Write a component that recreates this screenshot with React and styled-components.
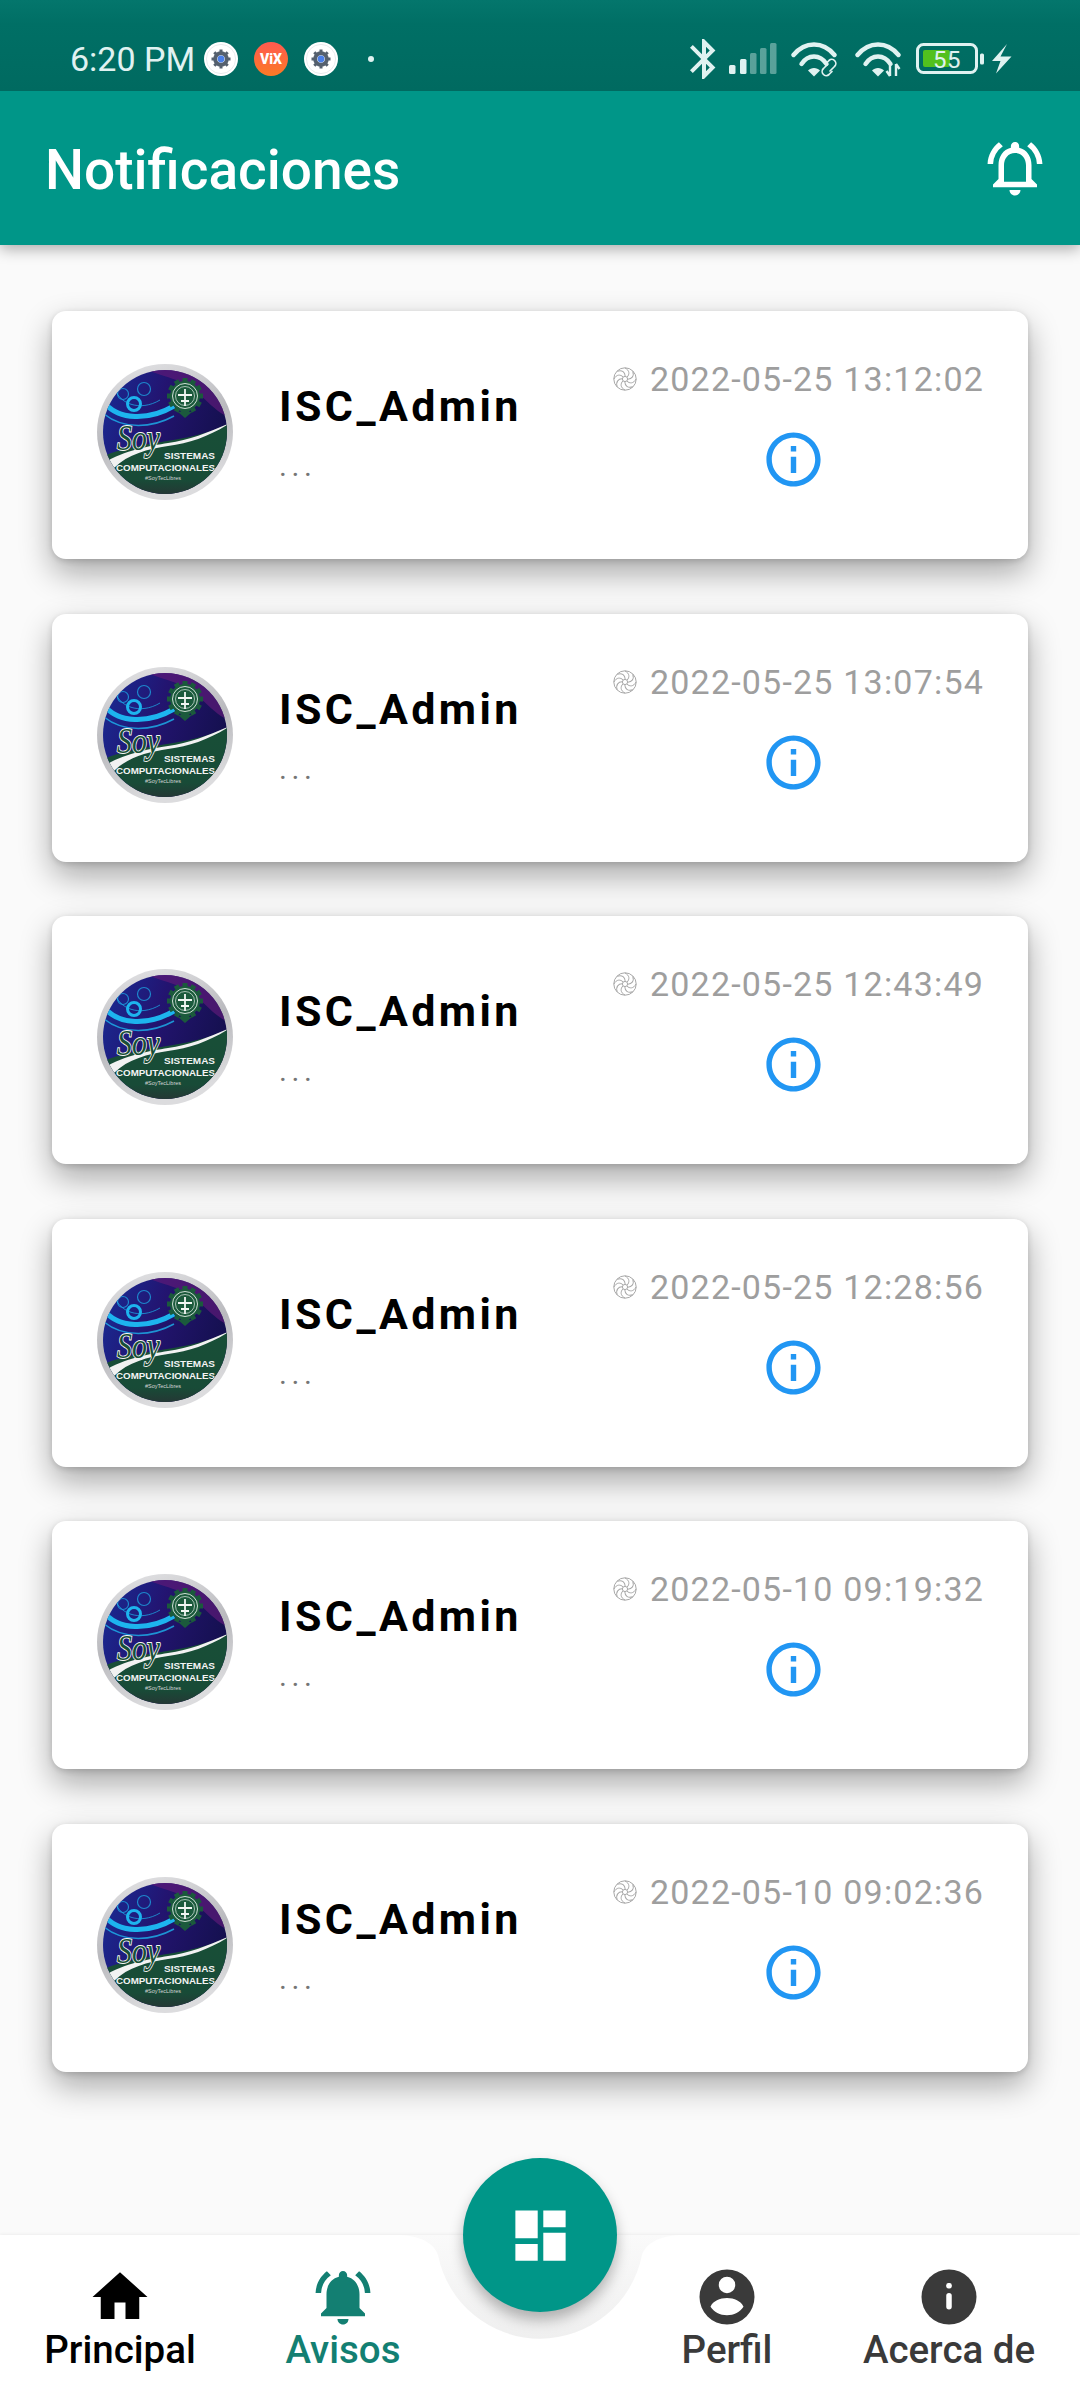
import React from "react";
import styled, { createGlobalStyle } from "styled-components";
import {
  MdBluetooth,
  MdDashboard,
  MdHome,
  MdInfoOutline,
  MdNotificationsActive,
  MdOutlineNotificationsActive,
} from "react-icons/md";

const GlobalStyle = createGlobalStyle`
  html, body {
    margin: 0;
    padding: 0;
    background: #fafafa;
  }
  * {
    box-sizing: border-box;
  }
`;

const Page = styled.div`
  width: 1080px;
  height: 2400px;
  display: flex;
  flex-direction: column;
  overflow: hidden;
  background: #fafafa;
  font-family: Roboto, "Liberation Sans", sans-serif;
`;

const StatusBar = styled.div`
  height: 91px;
  flex-shrink: 0;
  display: flex;
  align-items: center;
  justify-content: space-between;
  padding: 27px 68px 0 70px;
  color: #e0f2f1;
  background: linear-gradient(#04766c 0, #006f65 24px, #006a60 91px);
  position: relative;
  z-index: 3;
`;

const StatusGroup = styled.div`
  display: flex;
  align-items: center;
  gap: ${(p) => p.$gap}px;
`;

const Clock = styled.span`
  font-size: 34px;
  line-height: 40px;
  margin-right: -7px;
`;

const AppIcon = styled.svg`
  display: block;
  width: 34px;
  height: 34px;
`;

const StatusDot = styled.span`
  width: 6px;
  height: 6px;
  border-radius: 50%;
  background: #e0f2f1;
  margin-left: 14px;
`;

const BluetoothGlyph = styled(MdBluetooth)`
  display: block;
  margin-right: -13px;
`;

const StatusGlyph = styled.svg`
  display: block;
  margin-left: ${(p) => p.$shift || 0}px;
`;

const AppBar = styled.header`
  height: 154px;
  flex-shrink: 0;
  display: flex;
  align-items: center;
  justify-content: space-between;
  padding: 0 32px 0 45px;
  background: #009688;
  color: #fff;
  box-shadow: 0 4px 14px rgba(0, 0, 0, 0.32);
  position: relative;
  z-index: 2;
`;

const Title = styled.h1`
  margin: 3px 0 0;
  font-size: 55px;
  line-height: 60px;
  font-weight: 500;
`;

const List = styled.main`
  flex: 1;
  display: flex;
  flex-direction: column;
  gap: 54.6px;
  padding: 66px 52px 0;
`;

const Card = styled.article`
  height: 248px;
  flex-shrink: 0;
  display: flex;
  align-items: flex-start;
  padding: 53px 44px 0 45px;
  background: #fff;
  border-radius: 14px;
  box-shadow: 0 14px 32px rgba(0, 0, 0, 0.33), 0 2px 6px rgba(0, 0, 0, 0.15);
`;

const Avatar = styled.svg`
  display: block;
  width: 136px;
  height: 136px;
  flex-shrink: 0;
`;

const Message = styled.div`
  flex: 1;
  padding: 15px 0 0 46px;
`;

const Sender = styled.div`
  font-size: 43px;
  line-height: 54px;
  font-weight: 700;
  letter-spacing: 3.4px;
  color: #000;
`;

const Preview = styled.div`
  font-size: 30px;
  line-height: 36px;
  letter-spacing: 4.6px;
  color: #757575;
  margin-top: 15px;
`;

const Meta = styled.div`
  display: flex;
  flex-direction: column;
  align-items: center;
  margin-top: -5px;
`;

const DateLine = styled.div`
  display: flex;
  align-items: center;
  gap: 13px;
  font-size: 34px;
  line-height: 40px;
  letter-spacing: 1.2px;
  color: #9e9e9e;
  white-space: nowrap;
`;

const SwirlGlyph = styled.svg`
  display: block;
  flex-shrink: 0;
`;

const InfoButton = styled.div`
  display: flex;
  margin-top: 28px;
  margin-right: 10px;
  color: #2196f3;
`;

const BottomNav = styled.nav`
  height: 165px;
  flex-shrink: 0;
  display: grid;
  grid-template-columns: 240px 206px 178px 206px 238px;
  background: #fff;
  box-shadow: 0 -1px 3px rgba(0, 0, 0, 0.05);
  position: relative;
`;

const Notch = styled.svg`
  position: absolute;
  left: 0;
  top: -1px;
  width: 1080px;
  height: 112px;
`;

const Fab = styled.button`
  position: absolute;
  left: 463px;
  top: -77px;
  width: 154px;
  height: 154px;
  border: 0;
  padding: 0;
  border-radius: 50%;
  display: flex;
  align-items: center;
  justify-content: center;
  color: #fff;
  background: #009688;
  box-shadow: 0 8px 14px rgba(0, 0, 0, 0.28);
`;

const NavItem = styled.div`
  grid-column: ${(p) => p.$column};
  display: flex;
  flex-direction: column;
  align-items: center;
  padding-top: 29px;
  color: ${(p) => p.$color};
  position: relative;
`;

const NavIcon = styled.div`
  height: 65px;
  display: flex;
  font-size: 66px;
`;

const NavGlyph = styled.svg`
  display: block;
  width: 66px;
  height: 66px;
`;

const NavLabel = styled.span`
  font-size: 38.5px;
  line-height: 42px;
  font-weight: 500;
  white-space: nowrap;
`;

function GearBadge() {
  return (
    <AppIcon viewBox="0 0 34 34">
      <circle cx="17" cy="17" r="17" fill="#fff" />
      <circle cx="17" cy="17" r="14.6" fill="none" stroke="#d8dbe0" strokeWidth="0.6" />
      <circle cx="17" cy="17" r="5.800" fill="none" stroke="#55606e" strokeWidth="4" />
      <path
        stroke="#55606e"
        strokeWidth="3"
        d="M17 7.500V11M17 23v3.500M7.500 17H11M23 17h3.500M10.300 10.300l2.400 2.400M21.300 21.300l2.400 2.400M23.700 10.300l-2.400 2.400M12.700 21.300l-2.400 2.400"
      />
      <circle cx="17" cy="17" r="3.400" fill="#4a7fe8" />
    </AppIcon>
  );
}

function VixBadge() {
  return (
    <AppIcon viewBox="0 0 34 34">
      <defs>
        <linearGradient id="vixFill" x1="0" y1="0" x2="0" y2="1">
          <stop offset="0" stopColor="#ff5a50" />
          <stop offset="1" stopColor="#fb7a25" />
        </linearGradient>
      </defs>
      <circle cx="17" cy="17" r="17" fill="url(#vixFill)" />
      <text x="17" y="22" textAnchor="middle" fontFamily="Roboto, sans-serif" fontWeight="900" fontSize="14" fill="#fff">
        ViX
      </text>
    </AppIcon>
  );
}

function SignalBars() {
  const bars = [
    { x: 0, h: 9, o: 1 },
    { x: 11, h: 15, o: 1 },
    { x: 21, h: 21, o: 0.4 },
    { x: 31, h: 26, o: 0.4 },
    { x: 41, h: 31, o: 0.4 },
  ];
  return (
    <StatusGlyph width="48" height="32" viewBox="0 0 48 32">
      {bars.map((b) => (
        <rect key={b.x} x={b.x} y={31 - b.h} width="6.500" height={b.h} rx="1.500" fill="#e0f2f1" opacity={b.o} />
      ))}
    </StatusGlyph>
  );
}

function WifiIcon({ badge }) {
  return (
    <StatusGlyph width="50" height="38" viewBox="0 0 50 38" fill="none" stroke="#e0f2f1">
      <path d="M2.500 15C14 1 32 1 43.500 15" strokeWidth="4.400" strokeLinecap="round" />
      <path d="M10.500 24C17 14 29 14 35.500 24" strokeWidth="4.400" strokeLinecap="round" />
      <path d="M17 30.500C20 27 26 27 29 30.500L23 36.500Z" fill="#e0f2f1" stroke="none" />
      {badge === "link" ? (
        <g strokeWidth="1.700" strokeLinecap="round">
          <path d="M36 25l-3.500 3.500a4 4 0 0 0 5.500 6l3-3" />
          <path d="M39 31l4.500-4.500a4 4 0 0 0-5.500-6l-3 3" />
        </g>
      ) : (
        <g strokeWidth="2.400">
          <path d="M35 24v12M31.500 31l3.500 5" />
          <path d="M41 36V24M44.500 29L41 24" />
        </g>
      )}
    </StatusGlyph>
  );
}

function Battery() {
  return (
    <StatusGlyph $shift={-3} width="69" height="32" viewBox="0 0 69 32">
      <rect x="1.500" y="1.500" width="59" height="28" rx="6" fill="none" stroke="#e0f2f1" strokeWidth="3" />
      <rect x="7" y="7" width="27" height="17" rx="2" fill="#52c01e" />
      <rect x="64" y="10.500" width="4" height="11" rx="1.500" fill="#e0f2f1" />
      <text x="31" y="25" textAnchor="middle" fontFamily="Roboto, sans-serif" fontSize="24" letterSpacing="0.500" fill="#e0f2f1">
        55
      </text>
    </StatusGlyph>
  );
}

function Bolt() {
  return (
    <StatusGlyph $shift={-7} width="20" height="30" viewBox="0 0 20 30">
      <path d="M15 0L8.500 12.500H19.500L4 29.500L8.500 17H0Z" fill="#e0f2f1" />
    </StatusGlyph>
  );
}

function SwirlIcon() {
  const turns = [0, 45, 90, 135, 180, 225, 270, 315];
  return (
    <SwirlGlyph width="24" height="24" viewBox="0 0 24 24" fill="none" stroke="#a8a8a8" strokeWidth="1">
      <circle cx="12" cy="12" r="11.200" />
      <circle cx="12" cy="12" r="2.600" />
      {turns.map((t) => (
        <path key={t} d="M12 1C17 3.500 16.500 7.500 14.200 10" transform={`rotate(${t} 12 12)`} />
      ))}
    </SwirlGlyph>
  );
}

function SchoolLogo() {
  const gearTeeth = [0, 30, 60, 90, 120, 150, 180, 210, 240, 270, 300, 330];
  return (
    <Avatar viewBox="7 8 136 136">
      <defs>
        <linearGradient id="logoRing" x1="0" y1="0" x2="0.3" y2="1">
          <stop offset="0" stopColor="#e6e6e8" />
          <stop offset="0.55" stopColor="#b9b9bd" />
          <stop offset="1" stopColor="#dcdcde" />
        </linearGradient>
        <linearGradient id="logoSky" x1="0" y1="0" x2="1" y2="0.35">
          <stop offset="0" stopColor="#16309c" />
          <stop offset="0.5" stopColor="#231470" />
          <stop offset="1" stopColor="#14104e" />
        </linearGradient>
        <linearGradient id="logoGreen" x1="0" y1="0" x2="0" y2="1">
          <stop offset="0" stopColor="#184f37" />
          <stop offset="0.72" stopColor="#184b37" />
          <stop offset="1" stopColor="#2b2d33" />
        </linearGradient>
        <clipPath id="logoClip">
          <circle cx="75" cy="76" r="62" />
        </clipPath>
      </defs>
      <circle cx="75" cy="76" r="68" fill="url(#logoRing)" />
      <g clipPath="url(#logoClip)">
        <rect x="7" y="8" width="136" height="136" fill="url(#logoSky)" />
        <path d="M48 10H140V62C118 52 112 34 86 24C72 19 60 16 48 10Z" fill="#5c1a78" opacity="0.7" />
        <g fill="none" stroke="#1db4ee">
          <path d="M12 44C28 66 60 64 84 50" strokeWidth="5" />
          <path d="M14 58C34 74 62 72 84 60" strokeWidth="1.600" opacity="0.8" />
          <path d="M24 30C28 48 50 56 70 44" strokeWidth="1" opacity="0.7" />
          <circle cx="44" cy="48" r="6.500" strokeWidth="3" />
          <circle cx="33" cy="38" r="5.500" strokeWidth="1.200" opacity="0.7" />
          <circle cx="54" cy="33" r="6.500" strokeWidth="1.200" opacity="0.7" />
        </g>
        <path d="M14 100C50 84 100 88 140 67V146H14Z" fill="url(#logoGreen)" />
        <path d="M12 108C34 94 60 90 78 87C100 84 120 76 140 67C120 80 100 87 78 90C58 93 38 98 24 112Z" fill="#f2f2f2" />
        <g fill="#1b5a3c">
          {gearTeeth.map((t) => (
            <rect key={t} x="92.500" y="22" width="5" height="6" transform={`rotate(${t} 95 40)`} />
          ))}
          <circle cx="95" cy="40" r="15" />
          <path d="M87 50H103L99 56H102L95 62L88 56H91Z" />
        </g>
        <circle cx="95" cy="40" r="12.500" fill="none" stroke="#e4efe8" strokeWidth="0.900" />
        <circle cx="95" cy="40" r="9.500" fill="none" stroke="#e4efe8" strokeWidth="0.700" />
        <path d="M95 33V50M88 39H102M91 45H99" fill="none" stroke="#f2f6f3" strokeWidth="1.800" />
        <text x="27" y="94" fontFamily="'Liberation Serif', serif" fontStyle="italic" fontSize="36" fill="#184f37" stroke="#f4f4f4" strokeWidth="1.800" paintOrder="stroke" textLength="43" lengthAdjust="spacingAndGlyphs">
          Soy
        </text>
        <text x="74" y="103" fontFamily="'Liberation Sans', sans-serif" fontWeight="700" fontSize="9.500" fill="#f4f4f4" textLength="51" lengthAdjust="spacingAndGlyphs">
          SISTEMAS
        </text>
        <text x="26" y="115" fontFamily="'Liberation Sans', sans-serif" fontWeight="700" fontSize="9.500" fill="#f4f4f4" textLength="99" lengthAdjust="spacingAndGlyphs">
          COMPUTACIONALES
        </text>
        <text x="73" y="124" textAnchor="middle" fontFamily="'Liberation Sans', sans-serif" fontSize="5.500" fill="#d6d6d6">
          #SoyTecLibres
        </text>
      </g>
    </Avatar>
  );
}

function ProfileIcon() {
  return (
    <NavGlyph viewBox="0 0 24 24">
      <path
        fillRule="evenodd"
        fill="currentColor"
        d="M12 2a10 10 0 1 0 0 20a10 10 0 0 0 0-20ZM12 4.600a3 3 0 1 1 0 6a3 3 0 0 1 0-6ZM12 12.400c2.700 0 5 1.100 6 3.100c-1.200 1.900-3.500 3.100-6 3.100s-4.800-1.200-6-3.100c1-2 3.300-3.100 6-3.100Z"
      />
    </NavGlyph>
  );
}

function AboutIcon() {
  return (
    <NavGlyph viewBox="0 0 24 24">
      <circle cx="12" cy="12" r="10" fill="currentColor" />
      <rect x="11" y="6.900" width="2" height="2" rx="0.800" fill="#fff" />
      <rect x="11" y="10.500" width="2" height="6" rx="1" fill="#fff" />
    </NavGlyph>
  );
}

const notifications = [
  "2022-05-25 13:12:02",
  "2022-05-25 13:07:54",
  "2022-05-25 12:43:49",
  "2022-05-25 12:28:56",
  "2022-05-10 09:19:32",
  "2022-05-10 09:02:36",
];

export default function App() {
  return (
    <Page>
      <GlobalStyle />
      <StatusBar>
        <StatusGroup $gap={16}>
          <Clock>6:20 PM</Clock>
          <GearBadge />
          <VixBadge />
          <GearBadge />
          <StatusDot />
        </StatusGroup>
        <StatusGroup $gap={14}>
          <BluetoothGlyph size={48} />
          <SignalBars />
          <WifiIcon badge="link" />
          <WifiIcon badge="arrows" />
          <Battery />
          <Bolt />
        </StatusGroup>
      </StatusBar>
      <AppBar>
        <Title>Notificaciones</Title>
        <MdOutlineNotificationsActive size={66} />
      </AppBar>
      <List>
        {notifications.map((date) => (
          <Card key={date}>
            <SchoolLogo />
            <Message>
              <Sender>ISC_Admin</Sender>
              <Preview>...</Preview>
            </Message>
            <Meta>
              <DateLine>
                <SwirlIcon />
                {date}
              </DateLine>
              <InfoButton>
                <MdInfoOutline size={65} />
              </InfoButton>
            </Meta>
          </Card>
        ))}
      </List>
      <BottomNav>
        <Notch viewBox="0 0 1080 112">
          <defs>
            <linearGradient id="notchFill" x1="0" y1="0" x2="0" y2="1">
              <stop offset="0" stopColor="#fafafa" />
              <stop offset="1" stopColor="#efefef" />
            </linearGradient>
          </defs>
          <path
            d="M396 1C420 1 434 9 438 21A104 104 0 0 0 642 21C646 9 660 1 684 1Z"
            fill="url(#notchFill)"
          />
        </Notch>
        <NavItem $column={1} $color="#000">
          <NavIcon>
            <MdHome />
          </NavIcon>
          <NavLabel>Principal</NavLabel>
        </NavItem>
        <NavItem $column={2} $color="#137f72">
          <NavIcon>
            <MdNotificationsActive />
          </NavIcon>
          <NavLabel>Avisos</NavLabel>
        </NavItem>
        <NavItem $column={4} $color="#3a3a3a">
          <NavIcon>
            <ProfileIcon />
          </NavIcon>
          <NavLabel>Perfil</NavLabel>
        </NavItem>
        <NavItem $column={5} $color="#3a3a3a">
          <NavIcon>
            <AboutIcon />
          </NavIcon>
          <NavLabel>Acerca de</NavLabel>
        </NavItem>
        <Fab>
          <MdDashboard size={67} />
        </Fab>
      </BottomNav>
    </Page>
  );
}
